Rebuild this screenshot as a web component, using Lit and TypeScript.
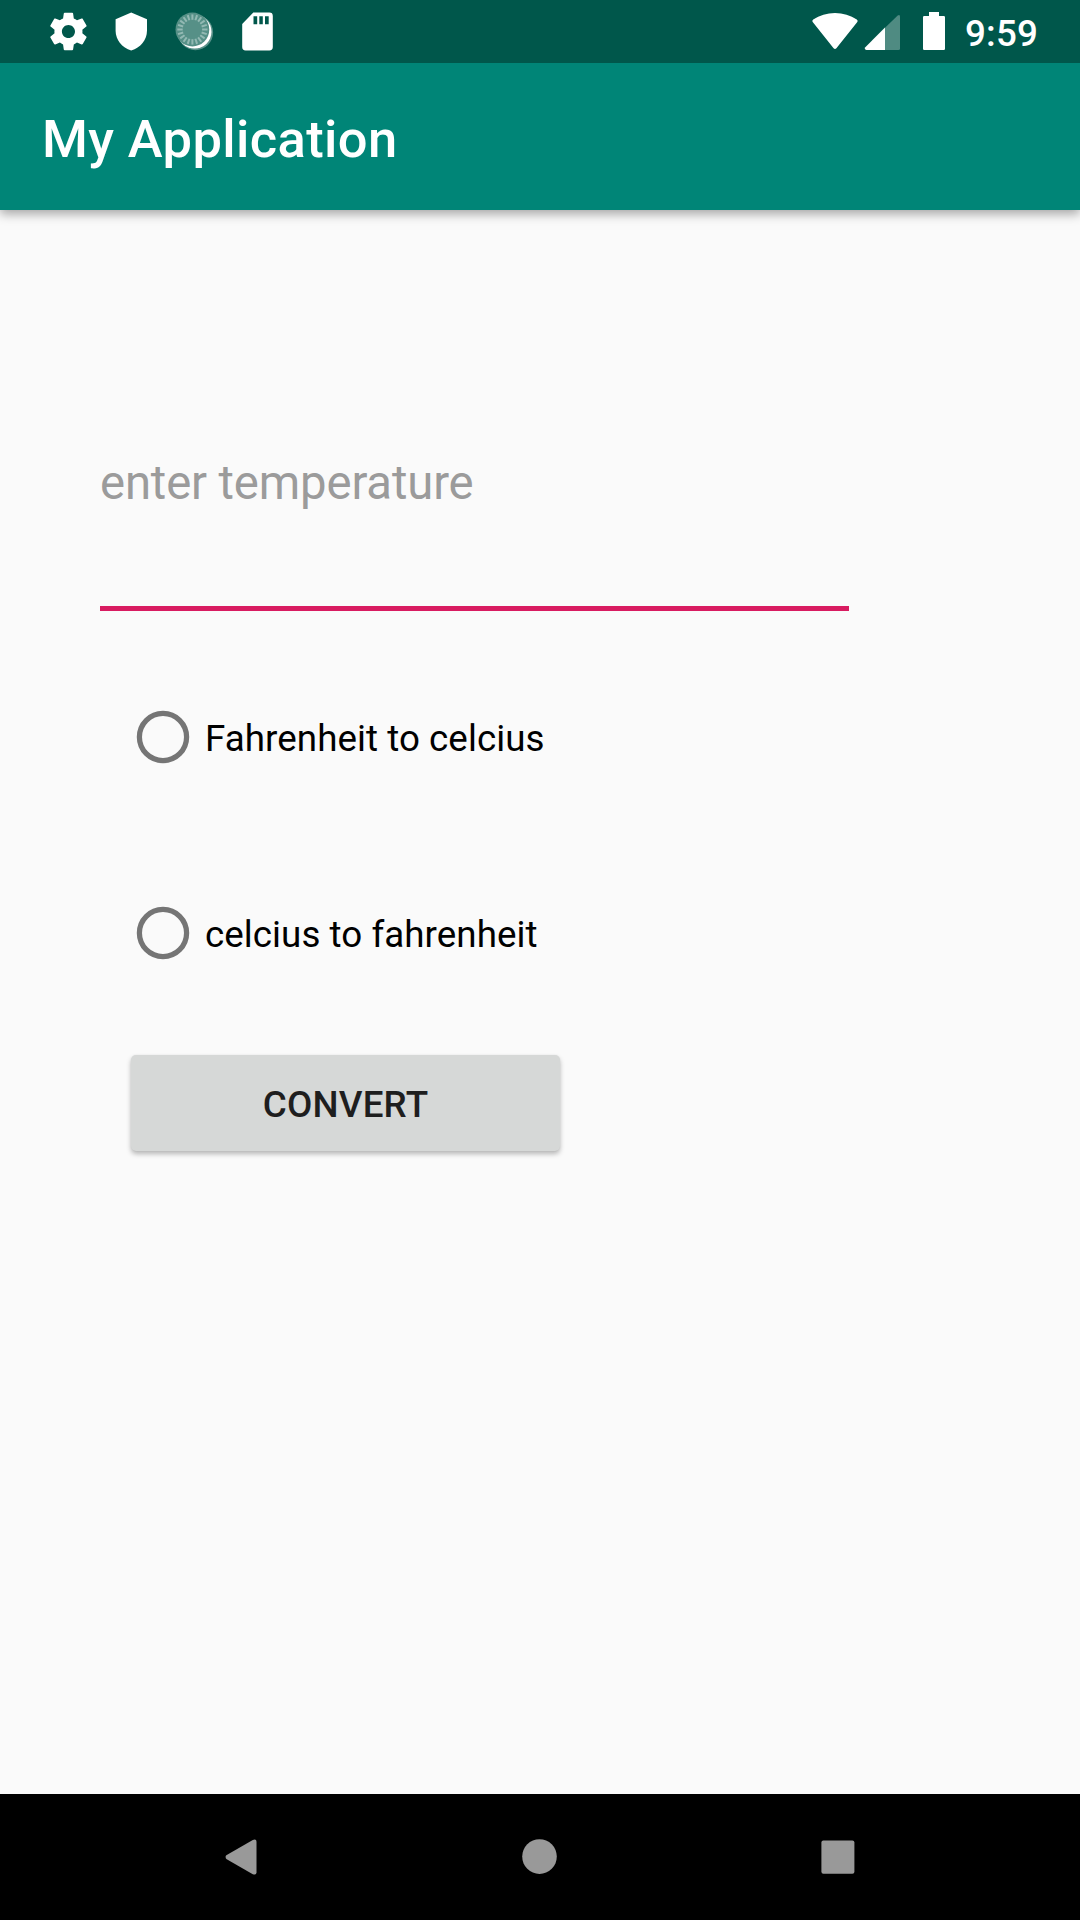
import { LitElement, html, css, svg } from "lit";
import { customElement, property } from "lit/decorators.js";

@customElement("status-bar")
class StatusBar extends LitElement {
  static styles = css`
    :host { display: flex; justify-content: space-between; height: 63px; background: #00574b; color: #fff; }
    .group { display: flex; }
    .left { padding-left: 44px; }
    .right { width: 270px; }
    svg { display: block; flex: none; height: 63px; fill: #fff; }
    .time { font-size: 36.75px; font-weight: 500; line-height: 67px; height: 63px; margin-left: 13px; letter-spacing: 0.15px; }
  `;

  private ticks() {
    return Array.from({ length: 20 }, (_, i) =>
      svg`<path d="M192.4 14.4V19.8" transform="rotate(${i * 18} 192.4 29.5)"></path>`);
  }

  render() {
    return html`
      <div class="group left">
        <svg width="56" viewBox="44 0 56 63">
          <path transform="translate(46 9.05) scale(1.87)" d="M19.43 12.98c.04-.32.07-.64.07-.98s-.03-.66-.07-.98l2.11-1.65c.19-.15.24-.42.12-.64l-2-3.46c-.12-.22-.39-.3-.61-.22l-2.49 1c-.52-.4-1.08-.73-1.69-.98l-.38-2.65C14.46 2.18 14.25 2 14 2h-4c-.25 0-.46.18-.49.42l-.38 2.65c-.61.25-1.17.59-1.69.98l-2.49-1c-.23-.09-.49 0-.61.22l-2 3.46c-.13.22-.07.49.12.64l2.11 1.65c-.04.32-.07.65-.07.98s.03.66.07.98l-2.11 1.65c-.19.15-.24.42-.12.64l2 3.46c.12.22.39.3.61.22l2.49-1c.52.4 1.08.73 1.69.98l.38 2.65c.03.24.24.42.49.42h4c.25 0 .46-.18.49-.42l.38-2.65c.61-.25 1.17-.59 1.69-.98l2.49 1c.23.09.49 0 .61-.22l2-3.46c.12-.22.07-.49-.12-.64l-2.11-1.65zM12 15.5c-1.93 0-3.5-1.57-3.5-3.5s1.57-3.5 3.5-3.5 3.5 1.57 3.5 3.5-1.57 3.5-3.5 3.5z"></path>
        </svg>
        <svg width="62" viewBox="100 0 62 63">
          <path d="M131.2 12.5L147 19.3V30.5C147 39.8 140.5 48 131.2 50.4C122 48 115.6 39.8 115.6 30.5V19.3Z"></path>
        </svg>
        <svg width="66" viewBox="162 0 66 63">
          <circle cx="195.4" cy="32.5" r="17.7" fill-opacity=".35"></circle>
          <circle cx="194.6" cy="31.7" r="16.9"></circle>
          <circle cx="192.4" cy="29.5" r="16.9" fill="#569087"></circle>
          <g stroke="#93b9b3" stroke-width="2">${this.ticks()}</g>
        </svg>
        <svg width="56" viewBox="228 0 56 63">
          <path fill-rule="evenodd" d="M253.3 12.6H269.4A3.4 3.4 0 0 1 272.8 16V47A3.4 3.4 0 0 1 269.4 50.4H245.6A3.4 3.4 0 0 1 242.2 47V24ZM253.5 16.3V24.3H257.2V16.3ZM259.3 16.3V24.3H262.8V16.3ZM265 16.3V24.3H268.7V16.3Z"></path>
        </svg>
      </div>
      <div class="group right">
        <svg width="142" viewBox="810 0 142 63">
          <path d="M812.9 22.2C812.1 21.3 812.2 20.3 813.2 19.5C819.5 15.2 827 13 835 13S850.5 15.2 856.8 19.5C857.8 20.3 857.9 21.3 857.1 22.2L836.4 48.2Q835 49.6 833.6 48.2Z"></path>
          <path fill-opacity=".31" d="M885 27.8L897.7 15.5Q900 14 900 16.6V48.5Q900 50 898.5 50H885Z"></path>
          <path d="M885 27.6V50H866.4Q863.8 49.5 865.3 47.3Z"></path>
          <path d="M929 12H939V16H943.8Q945 16 945 17.2V48.8Q945 50 943.8 50H924.2Q923 50 923 48.8V17.2Q923 16 924.2 16H929Z"></path>
        </svg>
        <span class="time">9:59</span>
      </div>
    `;
  }
}

@customElement("radio-option")
class RadioOption extends LitElement {
  @property() label = "";

  static styles = css`
    :host { display: flex; align-items: center; height: 84px; font-size: 36.75px; line-height: 44px; letter-spacing: 0.05px; color: #000; }
    .ring { width: 54px; height: 54px; margin-right: 15px; }
    .text { padding-top: 3px; }
  `;

  render() {
    return html`
      <svg class="ring" viewBox="0 0 54 54"><circle cx="27" cy="27" r="23.6" fill="none" stroke="#757575" stroke-width="5.25"></circle></svg>
      <span class="text">${this.label}</span>
    `;
  }
}

@customElement("nav-bar")
class NavBar extends LitElement {
  static styles = css`
    :host { display: flex; justify-content: center; height: 126px; background: #000; }
    svg { display: block; fill: #999; }
  `;

  render() {
    return html`
      <svg width="298" height="126" viewBox="93 1794 298 126"><path d="M226.3 1855.3L252.8 1839.9Q256.500 1838.400 256.500 1841.800V1872.300Q256.500 1875.600 252.800 1874.200L226.300 1858.900Q224.900 1857 226.300 1855.300Z"></path></svg>
      <svg width="298" height="126" viewBox="391 1794 298 126"><circle cx="539.5" cy="1856.6" r="17.3"></circle></svg>
      <svg width="298" height="126" viewBox="689 1794 298 126"><rect x="821.4" y="1840.4" width="33" height="33.3" rx="2"></rect></svg>
    `;
  }
}

@customElement("app-root")
class AppRoot extends LitElement {
  static styles = css`
    :host { display: flex; flex-direction: column; width: 1080px; height: 1920px; background: #fafafa; font-family: Roboto, sans-serif; overflow: hidden; }
    status-bar { z-index: 1; }
    .toolbar { box-sizing: border-box; height: 147px; padding: 5px 42px 0; background: #008577; color: #fff; font-size: 52.5px; font-weight: 500; line-height: 142px; letter-spacing: 0.37px; box-shadow: 0 4px 10px rgba(0, 0, 0, 0.34); }
    .content { flex: 1; display: flex; flex-direction: column; align-items: flex-start; }
    .field { box-sizing: border-box; width: 749px; height: 161px; margin: 240px 0 0 100px; padding-top: 3px; border-bottom: 5px solid #d81b60; font-size: 47.25px; line-height: 60px; letter-spacing: -0.14px; color: #9b9b9b; }
    .options { display: flex; flex-direction: column; gap: 112px; margin: 84px 0 0 136px; }
    .convert { box-sizing: border-box; width: 429px; height: 96px; margin: 80px 0 0 131px; padding: 3px 0 0; border: 0; border-radius: 5px; background: #d6d8d7; color: #1e1e1e; font: 500 36.75px/44px Roboto, sans-serif; letter-spacing: 0.2px; box-shadow: 0 3px 5px rgba(0, 0, 0, 0.27), 0 0 2px rgba(0, 0, 0, 0.06); }
  `;

  render() {
    return html`
      <status-bar></status-bar>
      <header class="toolbar">My Application</header>
      <main class="content">
        <div class="field">enter temperature</div>
        <div class="options">
          <radio-option label="Fahrenheit to celcius"></radio-option>
          <radio-option label="celcius to fahrenheit"></radio-option>
        </div>
        <button class="convert">CONVERT</button>
      </main>
      <nav-bar></nav-bar>
    `;
  }
}
